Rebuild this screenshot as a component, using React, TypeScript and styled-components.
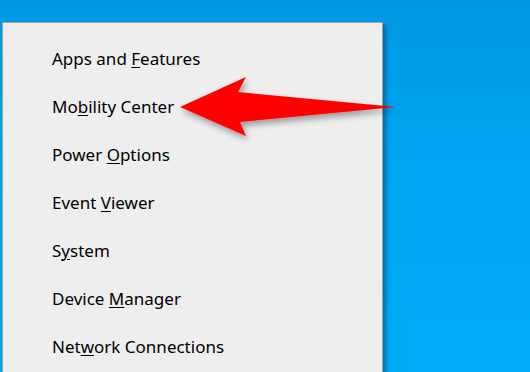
import React from 'react';
import styled, { createGlobalStyle } from 'styled-components';

const GlobalStyle = createGlobalStyle`
  html, body {
    margin: 0;
    padding: 0;
    overflow: hidden;
  }
`;

const Desktop = styled.div`
  position: relative;
  width: 530px;
  height: 372px;
  overflow: hidden;
  background: linear-gradient(180deg, #0098e2 0%, #00a6f2 45%, #00acf7 100%);
  padding: 22px 0 0 2px;
  box-sizing: border-box;
`;

const Menu = styled.div`
  width: 381px;
  height: 400px;
  box-sizing: border-box;
  background: #eeeeee;
  border: 1px solid #a0a0a0;
  box-shadow: 3px 3px 4px rgba(0, 40, 80, 0.45);
  padding-top: 11px;
  display: flex;
  flex-direction: column;
`;

const Item = styled.div`
  height: 48px;
  display: flex;
  align-items: center;
  padding-left: 49px;
  font-family: "Noto Sans", "Open Sans", sans-serif;
  font-size: 17px;
  color: #000;
`;

const Label = styled.span`
  white-space: pre;
`;

const Key = styled.span`
  text-decoration: underline;
  text-decoration-thickness: 1px;
  text-underline-offset: 2px;
`;

const Arrow = styled.svg`
  position: absolute;
  left: 0;
  top: 0;
  pointer-events: none;
`;

const items: [string, string, string][] = [
  ['Apps and ', 'F', 'eatures'],
  ['Mo', 'b', 'ility Center'],
  ['Power ', 'O', 'ptions'],
  ['Event ', 'V', 'iewer'],
  ['S', 'y', 'stem'],
  ['Device ', 'M', 'anager'],
  ['Net', 'w', 'ork Connections'],
];

export default function App() {
  return (
    <>
      <GlobalStyle />
      <Desktop>
        <Menu>
          {items.map(([a, k, b]) => (
            <Item key={a + k + b}>
              <Label>
                {a}
                <Key>{k}</Key>
                {b}
              </Label>
            </Item>
          ))}
        </Menu>
        <Arrow width="530" height="372" viewBox="0 0 530 372">
          <defs>
            <filter id="sh" x="-10%" y="-30%" width="130%" height="170%">
              <feDropShadow dx="2" dy="4" stdDeviation="3" floodColor="#000" floodOpacity="0.35" />
            </filter>
          </defs>
          <polygon
            points="180,107 246,77 238,92 396,107 240,122 246,136"
            fill="#ff0000"
            filter="url(#sh)"
          />
        </Arrow>
      </Desktop>
    </>
  );
}
